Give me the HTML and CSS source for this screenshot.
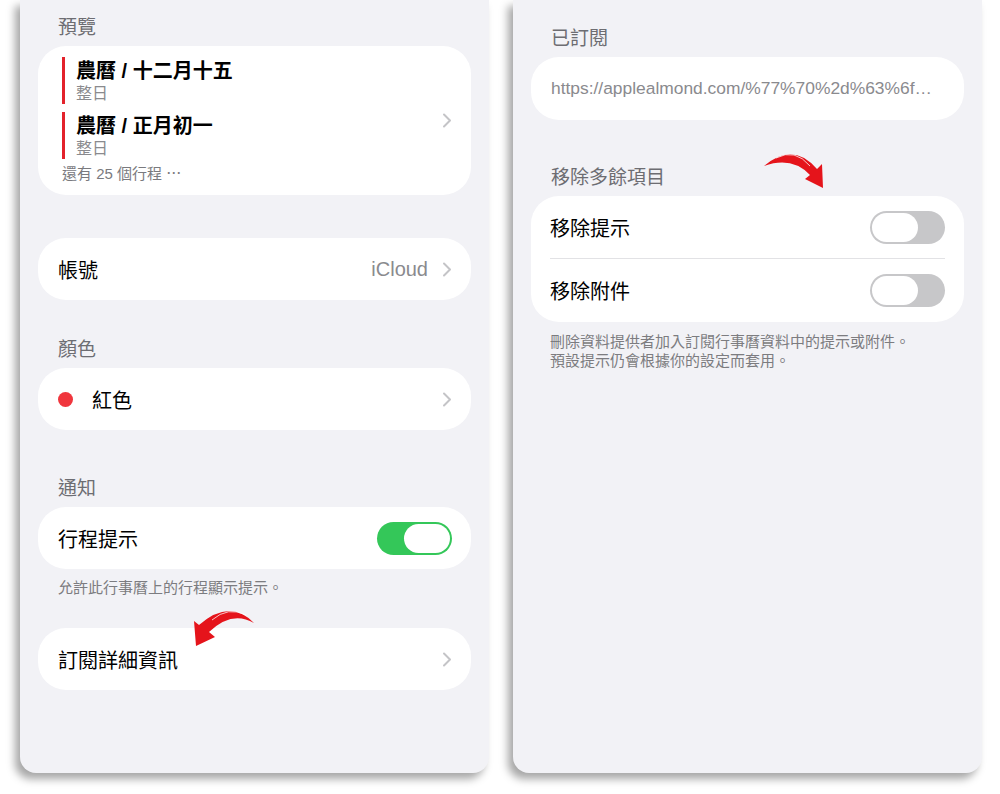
FILE: index.html
```html
<!DOCTYPE html>
<html lang="zh-Hant">
<head>
<meta charset="utf-8">
<title>行事曆設定</title>
<link rel="stylesheet" href="styles.css">
</head>
<body>
<div class="stage">
  <section class="panel panel-left">
    <h2 class="sec-title sec-preview">預覽</h2>
    <div class="card preview">
      <div class="events">
        <div class="event">
          <div class="ev-title">農曆 / 十二月十五</div>
          <div class="ev-sub">整日</div>
        </div>
        <div class="event">
          <div class="ev-title">農曆 / 正月初一</div>
          <div class="ev-sub">整日</div>
        </div>
        <div class="more">還有 25 個行程 ⋯</div>
      </div>
      <svg class="chev" width="10" height="15" viewBox="0 0 10 15"><path d="M2 1.5 L8 7.5 L2 13.5" fill="none" stroke="#c4c4c7" stroke-width="2" stroke-linecap="round" stroke-linejoin="round"/></svg>
    </div>

    <div class="card row account">
      <span class="label">帳號</span>
      <span class="value">iCloud</span>
      <svg class="chev" width="10" height="15" viewBox="0 0 10 15"><path d="M2 1.5 L8 7.5 L2 13.5" fill="none" stroke="#c4c4c7" stroke-width="2" stroke-linecap="round" stroke-linejoin="round"/></svg>
    </div>

    <h2 class="sec-title sec-color">顏色</h2>
    <div class="card row">
      <span class="dot"></span>
      <span class="label color-label">紅色</span>
      <svg class="chev" width="10" height="15" viewBox="0 0 10 15"><path d="M2 1.5 L8 7.5 L2 13.5" fill="none" stroke="#c4c4c7" stroke-width="2" stroke-linecap="round" stroke-linejoin="round"/></svg>
    </div>

    <h2 class="sec-title sec-notify">通知</h2>
    <div class="card row">
      <span class="label">行程提示</span>
      <span class="toggle on"><span class="knob"></span></span>
    </div>
    <p class="note note-left">允許此行事曆上的行程顯示提示。</p>

    <div class="card row details">
      <span class="label">訂閱詳細資訊</span>
      <svg class="chev" width="10" height="15" viewBox="0 0 10 15"><path d="M2 1.5 L8 7.5 L2 13.5" fill="none" stroke="#c4c4c7" stroke-width="2" stroke-linecap="round" stroke-linejoin="round"/></svg>
    </div>
  </section>

  <section class="panel panel-right">
    <h2 class="sec-title sec-subscribed">已訂閱</h2>
    <div class="card row url-row">
      <span class="url">https://applealmond.com/%77%70%2d%63%6f…</span>
    </div>

    <h2 class="sec-title sec-remove">移除多餘項目</h2>
    <div class="card group">
      <div class="row group-row sep">
        <span class="label">移除提示</span>
        <span class="toggle off"><span class="knob"></span></span>
      </div>
      <div class="row group-row">
        <span class="label">移除附件</span>
        <span class="toggle off"><span class="knob"></span></span>
      </div>
    </div>
    <p class="note note-right">刪除資料提供者加入訂閱行事曆資料中的提示或附件。<br>預設提示仍會根據你的設定而套用。</p>
  </section>

  <svg class="arrows" width="1000" height="794" viewBox="0 0 1000 794">
    <path d="M254 623 Q230 598 199 625 L194 621 L196 646 L215 637 L209 632 Q232 610 254 623 Z" fill="#e5141b"/>
    <path d="M246 615 Q228 606 212 620" fill="none" stroke="#ffffff" stroke-width="1" stroke-opacity="0.75"/>
    <path d="M764 166 Q793 141 817 169 L822 164 L823 188 L805 179 L810 175 Q792 156 764 166 Z" fill="#e5141b"/>
    <path d="M776 158 Q795 148 810 166" fill="none" stroke="#ffffff" stroke-width="1" stroke-opacity="0.75"/>
  </svg>
</div>
</body>
</html>
```

FILE: styles.css
```css
* {
  box-sizing: border-box;
}

html, body {
  margin: 0;
  padding: 0;
  background: #ffffff;
}

body {
  width: 1000px;
  height: 794px;
  overflow: hidden;
  font-family: "Liberation Sans", "Noto Sans CJK TC", sans-serif;
  color: #000000;
}

.stage {
  position: relative;
  display: flex;
  gap: 24px;
  padding-left: 20px;
  width: 1000px;
  height: 794px;
}

.panel {
  width: 469px;
  height: 773px;
  background: #f2f2f6;
  border-radius: 0 0 16px 16px;
  box-shadow: -5px 6px 9px rgba(0, 0, 0, 0.35);
  padding: 0 18px;
  display: flex;
  flex-direction: column;
}

.sec-title {
  margin: 0 0 6px 0;
  padding: 2px 0 0 20px;
  font-size: 19px;
  line-height: 24px;
  font-weight: 400;
  color: #6d6d72;
}

.sec-preview { margin-top: 14px; }
.sec-color { margin-top: 36px; }
.sec-notify { margin-top: 45px; }
.sec-subscribed { margin-top: 25px; }
.sec-remove { margin-top: 44px; }

.card {
  background: #ffffff;
  border-radius: 28px;
}

.row {
  display: flex;
  align-items: center;
  height: 62px;
  padding: 0 19px 0 20px;
}

.label {
  font-size: 20px;
  flex: 1;
}

.value {
  font-size: 20px;
  color: #8a8a8e;
  margin-right: 14px;
}

.chev {
  flex: none;
  display: block;
}

.account { margin-top: 43px; }

/* preview card */
.preview {
  display: flex;
  align-items: center;
  padding: 11px 19px 11px 24px;
}

.events {
  flex: 1;
  display: flex;
  flex-direction: column;
  gap: 8px;
}

.event {
  border-left: 3px solid #e3222b;
  padding-left: 11px;
}

.ev-title {
  font-size: 20px;
  line-height: 26px;
  padding-top: 1px;
  margin-bottom: -1px;
  font-weight: 700;
}

.ev-sub {
  font-size: 16px;
  line-height: 21px;
  color: #8a8a8e;
}

.more {
  margin-top: -3px;
  font-size: 15px;
  line-height: 20px;
  color: #7a7a7e;
}

/* color row */
.dot {
  width: 15px;
  height: 15px;
  border-radius: 50%;
  background: #f0363d;
  margin-right: 19px;
  flex: none;
}

/* toggles */
.toggle {
  flex: none;
  width: 75px;
  height: 33px;
  border-radius: 17px;
  padding: 2px;
  display: flex;
}

.toggle .knob {
  width: 46px;
  height: 29px;
  border-radius: 15px;
  background: #ffffff;
}

.toggle.on {
  background: #34c759;
  justify-content: flex-end;
}

.toggle.off {
  background: #c7c7c9;
  justify-content: flex-start;
}

.note {
  margin: 0;
  padding-left: 20px;
  font-size: 15px;
  color: #7c7c80;
}

.note-left {
  margin-top: 9px;
  line-height: 20px;
}

.details { margin-top: 30px; }

/* right panel */
.url-row {
  height: 63px;
}

.url {
  font-size: 17.4px;
  color: #8a8a8e;
  white-space: nowrap;
}

.group {
  padding: 0;
}

.group-row {
  height: 63px;
  padding: 0 19px 0 19px;
  position: relative;
}

.group-row.sep::after {
  content: "";
  position: absolute;
  left: 19px;
  right: 19px;
  bottom: 0;
  height: 1px;
  background: #e2e2e5;
}

.note-right {
  margin-top: 10px;
  padding-left: 19px;
  line-height: 19px;
}

.arrows {
  position: absolute;
  left: 0;
  top: 0;
  pointer-events: none;
}
```
